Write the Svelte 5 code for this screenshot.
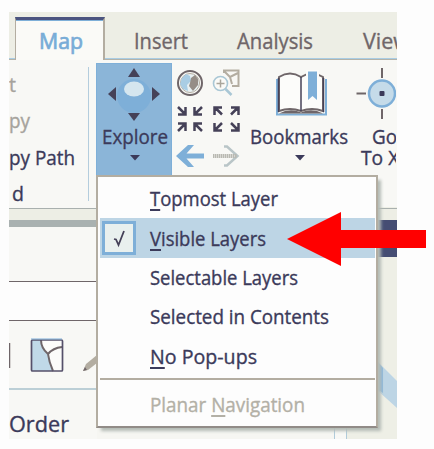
<script>
  const tabs = [
    { label: 'Insert', left: 29, width: 54 },
    { label: 'Analysis', left: 49, width: 76 },
    { label: 'View', left: 50, width: 47 }
  ];
  const items = [
    { key: 'T', rest: 'opmost Layer', width: 128 },
    { key: 'V', rest: 'isible Layers', width: 116, checked: true },
    { key: '', rest: 'Selectable Layers', width: 148 },
    { key: '', rest: 'Selected in Contents', width: 179 },
    { key: 'N', rest: 'o Pop-ups', width: 107 }
  ];
  // Condenses a label horizontally to the requested advance width.
  function fit(node, width) {
    const natural = node.getBoundingClientRect().width;
    node.style.transform = `scaleX(${width / natural})`;
  }
</script>

{#snippet down()}
  <svg class="down" width="10" height="6" viewBox="0 0 10 6"><path d="M0 0h10L5 5.5z" fill="#3b3a5a" /></svg>
{/snippet}

<div class="page">
  <div class="shot">
    <nav class="tabs">
      <div class="lead"></div>
      <div class="tab active"><span class="t" use:fit={44}>Map</span></div>
      {#each tabs as tab}
        <div class="tab" style:margin-left="{tab.left}px" style:width="{tab.width}px"><span class="t" use:fit={tab.width}>{tab.label}</span></div>
      {/each}
    </nav>

    <div class="ribbon">
      <div class="clip">
        <div class="dim"><span class="t">t</span></div>
        <div class="dim"><span class="t" use:fit={21}>py</span></div>
        <div><span class="t" use:fit={66}>py Path</span></div>
        <div class="d"><span class="t">d</span></div>
      </div>
      <div class="rule"></div>
      <div class="explore">
        <svg width="76" height="60" viewBox="0 0 76 60">
          <circle cx="38" cy="33" r="17" fill="#7eafd8" />
          <ellipse cx="38" cy="26" rx="10" ry="7.5" fill="#d5e6ef" />
          <g fill="#454158"><path d="M38 5l6 9H32z" /><path d="M38 58l6-8H32z" /><path d="M12 31l8-7v14z" /><path d="M64 31l-8-7v14z" /></g>
        </svg>
        <span class="t" use:fit={66}>Explore</span>
        {@render down()}
      </div>
      <div class="tools">
        <svg width="74" height="112" viewBox="172 62 74 112" fill="none">
          <circle cx="190" cy="83" r="12" fill="#fafaf7" stroke="#6f6669" stroke-width="2" />
          <circle cx="190" cy="83" r="9.5" fill="#e8f0f2" stroke="#b3ada1" />
          <path d="M182 78l4-4 4 2 1 5-4 4 1 6-5-2-3-5z" fill="#a9cde4" />
          <path d="M191 78l4-3 3 4v6l-5 6-4-5 1-3z" fill="#958d87" />
          <path d="M224 73v-2.500h14.500V86H232M224 71l6 6 8-4M230 77l2 7" stroke="#b3ada1" stroke-width="2" />
          <circle cx="220.500" cy="83.500" r="7" fill="#fafaf7" stroke="#a9c7d5" stroke-width="1.600" />
          <path d="M220.500 79.500v8M216.500 83.500h8" stroke="#aaa69c" stroke-width="1.500" />
          <path d="M225.500 89l6 6" stroke="#a9c7d5" stroke-width="2.500" />
          <g stroke="#454158" stroke-width="2.500">
            <path d="M178 107l7 7M185.500 107v7.500H178M202 107l-7 7M194.500 107v7.500H202" />
            <path d="M178 131l7-7M185.500 131v-7.500H178M202 131l-7-7M194.500 131v-7.500H202" />
            <path d="M222 114.500l-7-7M214.500 115v-7.500H222M231 114.500l7-7M238.500 115v-7.500H231" />
            <path d="M222 123l-7 7M214.500 123v7.500H222M231 123l7 7M238.500 123v7.500H231" />
          </g>
          <path d="M176 156l12-11h6l-7.500 8.500H204v5h-17.500L194 167h-6z" fill="#7eafd8" />
          <path d="M224 146.500h3l10.500 9.500-10.500 9.500h-3" stroke="#b9c5c7" stroke-width="2.500" />
          <path d="M213 156h24" stroke="#b9b9b1" stroke-width="4" stroke-dasharray="1.500 .5" />
        </svg>
      </div>
      <div class="bookmarks">
        <svg width="56" height="50" viewBox="270 68 56 50" fill="none">
          <path d="M275 79v35.500h49V79" stroke="#7eafd8" stroke-width="2" />
          <path d="M277 111V77q11-7 22 0 11-7 22 0v34q-11-4-22 0-11-4-22 0z" fill="#fcfcfa" stroke="#6f6669" stroke-width="2" />
          <path d="M299 77v34M276.500 78v34M321.500 78v34" stroke="#454158" stroke-width="1.500" />
          <path d="M277 113.500q11-6 22-1 11-5 22 1z" fill="#6f6669" />
          <path d="M304 70h13v30H304z" fill="#fcfcfa" />
          <path d="M306 71.500h9V100l-4.500-4-4.500 4z" fill="#7eafd8" />
        </svg>
        <span class="t" use:fit={98}>Bookmarks</span>
        {@render down()}
      </div>
      <div class="goto">
        <svg width="45" height="52" viewBox="352 68 45 52" fill="none">
          <circle cx="383" cy="93.500" r="13" fill="#c5dbe9" stroke="#7eafd8" stroke-width="2.500" />
          <path d="M383 68v10M383 109v10M357.500 93.500H367" stroke="#6f6669" stroke-width="2" />
          <rect x="380.500" y="91" width="5" height="5" rx="1" fill="#3b3a5a" />
        </svg>
        <span class="t go" use:fit={25}>Go</span>
        <span class="t" use:fit={49}>To XY</span>
      </div>
    </div>

    <div class="lower">
      <div class="left">
        <div class="strip"></div>
        <div class="band"></div>
        <div class="blank"></div>
        <div class="field"></div>
        <div class="bar">
          <svg width="88" height="68" viewBox="9 321 88 68" fill="none">
            <path d="M9.500 343v25" stroke="#6f6669" stroke-width="1.500" />
            <rect x="31.500" y="340" width="31" height="31" rx="1" fill="#fcfcfa" />
            <path d="M32 340h9q0 8 7 14 1 8 5 17H32z" fill="#c0d9e8" />
            <path d="M41 340q0 8 7 14 1 8 5 17M48 354q5-6 14-7" stroke="#6f6669" stroke-width="2" />
            <rect x="31.500" y="340" width="31" height="31" rx="1" stroke="#55506a" stroke-width="1.700" />
            <path d="M31 339h31" stroke="#7eafd8" />
            <path d="M83 371l3-7 11-9v8l-9 7z" fill="#b3ada1" /><path d="M83 371l2-4 2 3z" fill="#6f6669" />
          </svg>
        </div>
        <div class="order"><span class="t" use:fit={60}>Order</span></div>
      </div>
      <div class="foot"><div class="scroll"></div></div>
      <div class="right">
        <div class="strip"></div>
        <div class="navy"></div>
        <svg width="50" height="182" viewBox="347 257 50 182"><path d="M377 361l20 20v27l-20-18z" fill="#bdd5e5" /><path d="M377 361l6 7v25l-6-4z" fill="#8eb9dc" /></svg>
      </div>
    </div>
  </div>

  <div class="menu">
    {#each items as item}
      <div class="item" class:checked={item.checked}>
        <div class="gutter">
          {#if item.checked}
            <div class="check"><svg width="26" height="26" viewBox="0 0 26 26" fill="none"><path d="M8 14l2 .5 2.500 5.500L18 6" stroke="#454158" stroke-width="1.800" /></svg></div>
          {/if}
        </div>
        <span class="t" use:fit={item.width}>{#if item.key}<u>{item.key}</u>{/if}{item.rest}</span>
      </div>
    {/each}
    <div class="divider"></div>
    <div class="item off"><div class="gutter"></div><span class="t" use:fit={155}>Planar <u>N</u>avigation</span></div>
  </div>

  <svg class="arrow" width="139" height="54" viewBox="0 0 139 54"><path d="M0 27L54 0v18h85v18H54v18z" fill="#f00" /></svg>
</div>

<style>
  :global(body) { background: #fdfdfd; }
  .page { position: relative; box-sizing: border-box; width: 434px; height: 449px; padding: 12px 37px 10px 9px; overflow: hidden; background: #fdfdfd; font: 19.5px/20px "Open Sans", "Noto Sans", sans-serif; color: #3b3a5a; }
  svg { display: block; flex: none; }
  .t { display: block; flex: none; width: max-content; white-space: nowrap; transform-origin: 0 50%; -webkit-text-stroke: .35px currentColor; }
  .shot { width: 388px; height: 427px; overflow: hidden; display: flex; flex-direction: column; background: #f8f8f5; }
  .tabs { height: 48px; flex: none; display: flex; box-sizing: border-box; background: linear-gradient(#b3b3aa, #b3b3aa) 0 47px / 100% 1px no-repeat, linear-gradient(#a9cce3, #a9cce3) 0 46px / 100% 1px no-repeat, #edeee5; font-size: 21px; color: #6f6669; }
  .lead { width: 6px; flex: none; }
  .tab { flex: none; padding-top: 19px; box-sizing: border-box; }
  .active { width: 90px; height: 43px; margin-top: 5px; padding: 11px 0 0 23px; border: solid #b3ada1; border-width: 3px 2px 0 1px; border-top-color: #4b5480; background: #fafaf7; color: #78acd7; box-shadow: inset 0 1px #7eafd8; }
  .active .t { -webkit-text-stroke-width: .7px; }
  .ribbon { height: 147px; flex: none; display: flex; }
  .clip { width: 79px; flex: none; display: flex; flex-direction: column; gap: 16.500px; padding-top: 14.500px; }
  .clip .d { padding-left: 3px; }
  .dim { color: #a6a39c; }
  .rule { width: 1px; flex: none; height: 134px; margin: 7px 7px 0 0; background: #b4cddd; }
  .explore { width: 76px; flex: none; height: 113px; margin: 3px 0 0; background: #8bb5d8; box-shadow: inset 0 0 0 1px #7eafd8; display: flex; flex-direction: column; }
  .explore .t { margin: 4px 0 0 6px; }
  .explore .down { margin: 8px 0 0 34px; }
  .tools { width: 74px; flex: none; padding-top: 2px; }
  .bookmarks { width: 105px; flex: none; padding-top: 8px; }
  .bookmarks svg:first-child { margin-left: 26px; }
  .bookmarks .t { margin: 9px 0 0 4px; }
  .bookmarks .down { margin: 8px 0 0 49px; }
  .goto { width: 45px; flex: none; padding-top: 8px; overflow: hidden; }
  .goto .go { margin: 7px 0 1px 21px; }
  .goto .t:last-child { margin-left: 10px; }
  .lower { height: 232px; display: flex; }
  .left { width: 88px; display: flex; flex-direction: column; }
  .strip { height: 12px; box-sizing: border-box; border-top: 1px solid #a9b0ae; background: #edeee5; margin-top: 1px; }
  .left .strip { height: 12px; margin-top: 1px; }
  .band { height: 7px; background: #a9b1b0; }
  .blank { height: 54px; background: #f8f8f5; }
  .field { height: 40px; box-sizing: border-box; border: solid #6f6669; border-width: 1px 0; background: #fdfdfd; }
  .bar { height: 67px; }
  .order { border-top: 2px solid #bccfd6; padding: 24px 0 0; font-size: 21px; flex: 1; }
  .foot { width: 250px; display: flex; justify-content: flex-end; align-items: flex-end; background: #f6f6f2; }
  .scroll { width: 11px; height: 12px; border: solid #b0cbda; border-width: 0 1px; background: #f8f8f5; }
  .right { width: 50px; background: #eeefe6; }
  .navy { height: 37px; background: #454d73; }
  .menu { position: absolute; left: 96px; top: 175px; width: 282px; height: 253px; box-sizing: border-box; border: 2px solid #b3ada1; border-bottom-color: #918b87; background: #fdfdfd; padding: 2px 1px 0 2px; box-shadow: 4px 4px 3px -1px #b4bbb5; }
  .item { height: 39.300px; display: flex; align-items: center; }
  .item .t { padding-top: 1.500px; margin-left: 1px; }
  .checked { background: #bdd5e5; }
  .gutter { width: 49px; flex: none; }
  .check { width: 26px; height: 26px; margin-left: 2px; padding: 1px; border: 3px solid #7eafd8; background: #e9f0ee; }
  u { text-underline-offset: 3px; text-decoration-thickness: 2px; }
  .divider { height: 2px; margin: 3px 0 4px; background: #b3ada1; }
  .off { color: #b3b0a6; }
  .arrow { position: absolute; left: 287px; top: 212px; }
</style>
